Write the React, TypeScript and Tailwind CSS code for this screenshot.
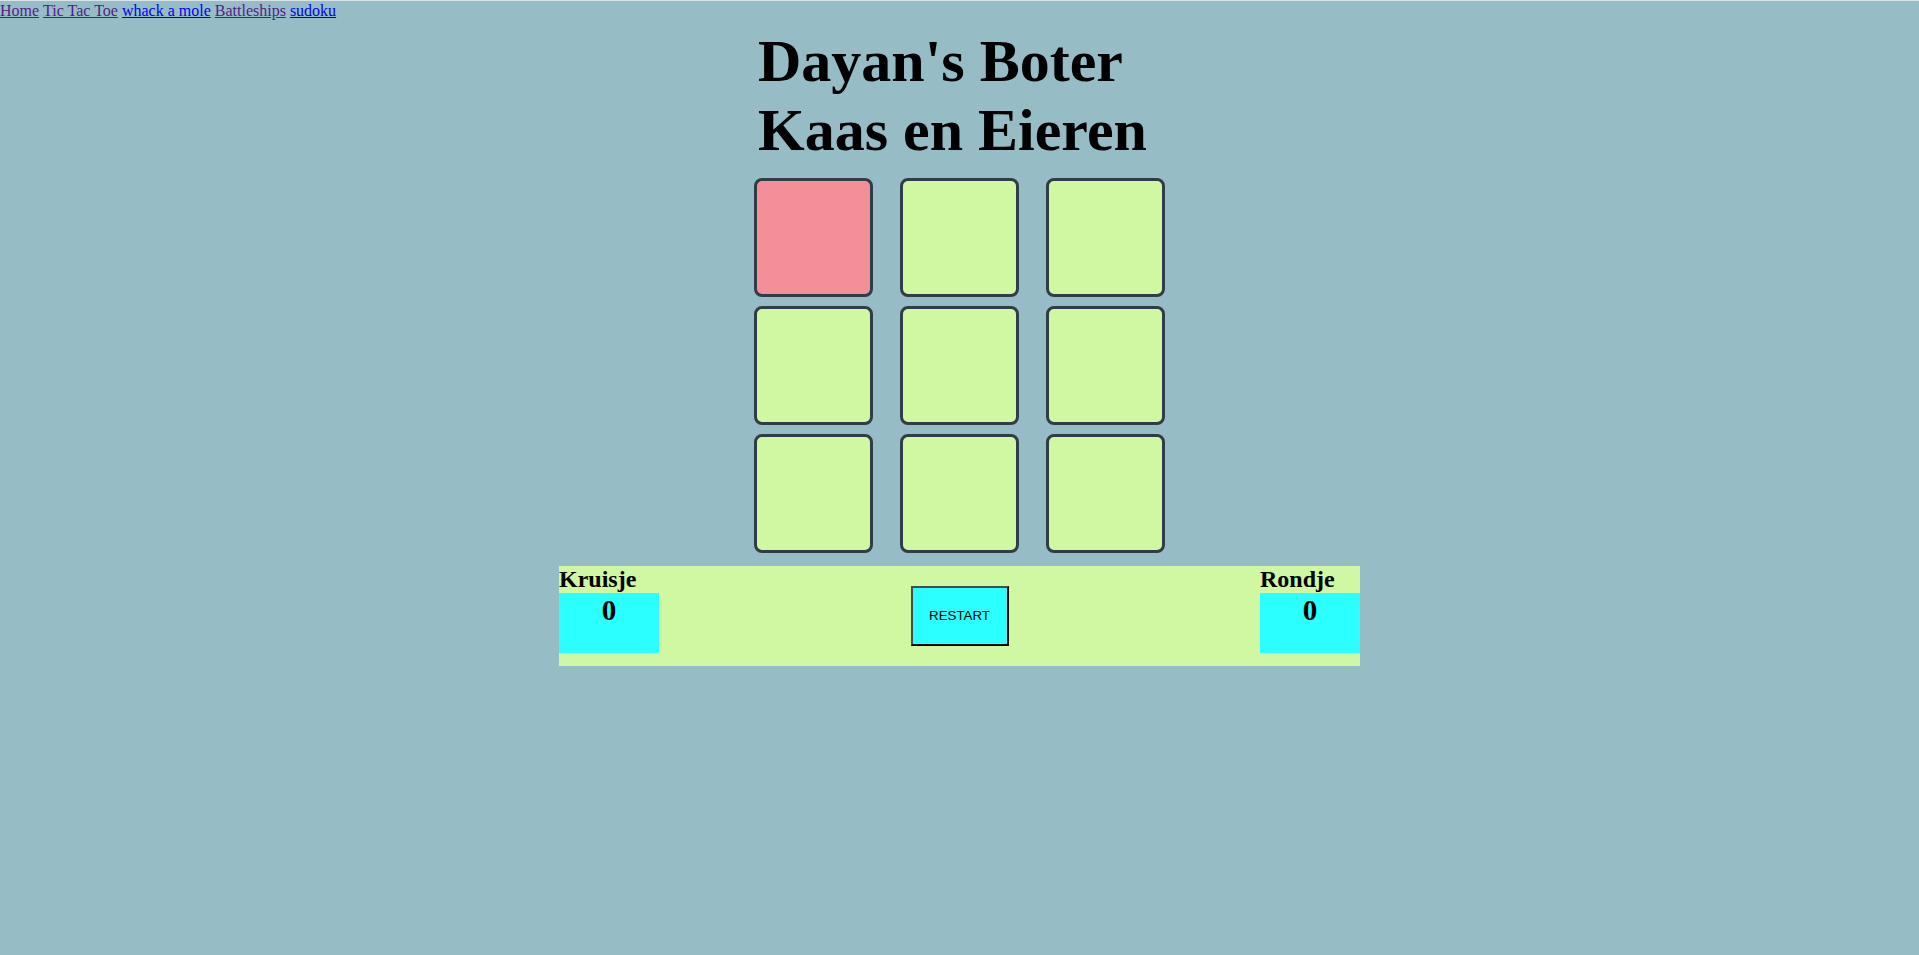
import { useState } from "react";

const links = [
  { label: "Home", visited: true },
  { label: "Tic Tac Toe", visited: true },
  { label: "whack a mole", visited: false },
  { label: "Battleships", visited: true },
  { label: "sudoku", visited: false },
];

const serif = { fontFamily: '"Liberation Serif", "Times New Roman", serif' };

const ScoreBox = ({ name, score }: { name: string; score: number }) => (
  <div className="flex w-[100px] flex-col self-start">
    <div className="text-[24px] font-bold leading-[27px] text-black">{name}</div>
    <div className="flex h-[60px] justify-center bg-[#2bffff] pt-[1px] text-[29px] font-bold leading-[32px] text-black">
      {score}
    </div>
  </div>
);

export default function App() {
  const [cells, setCells] = useState<boolean[]>([true, false, false, false, false, false, false, false, false]);

  return (
    <div className="min-h-[955px] border-t border-[#d6e4e7] bg-[#96bdc6]" style={serif}>
      <nav className="flex gap-[4px] pt-[1px] text-[16px] leading-[18px]">
        {links.map((link) => (
          <a
            key={link.label}
            href="#"
            className={link.visited ? "text-[#551a8b] underline" : "text-[#0000ee] underline"}
          >
            {link.label}
          </a>
        ))}
      </nav>

      <div className="mx-auto mt-[7px] w-[411px]">
        <h1 className="pl-[4px] text-[60px] font-bold leading-[69px] text-black">
          Dayan's Boter Kaas en Eieren
        </h1>

        <div className="mt-[13px] grid grid-cols-[119px_119px_119px] gap-x-[27px] gap-y-[9px]">
          {cells.map((active, i) => (
            <button
              key={i}
              onClick={() => setCells(cells.map((c, j) => (j === i ? !c : c)))}
              className={`h-[119px] w-[119px] rounded-[8px] border-[3px] border-[#2f3d48] ${
                active ? "bg-[#f48f99]" : "bg-[#d0f7a2]"
              }`}
            />
          ))}
        </div>
      </div>

      <div className="mx-auto mt-[13px] flex h-[100px] w-[801px] items-center justify-between bg-[#d0f7a2]">
        <ScoreBox name="Kruisje" score={0} />
        <button
          className="h-[60px] w-[98px] border-2 border-t-[#4a4a4a] border-l-[#4a4a4a] border-b-black border-r-black bg-[#2bffff] text-[13.33px] text-black"
          style={{ fontFamily: '"Liberation Sans", Arial, sans-serif' }}
        >
          RESTART
        </button>
        <ScoreBox name="Rondje" score={0} />
      </div>
    </div>
  );
}
